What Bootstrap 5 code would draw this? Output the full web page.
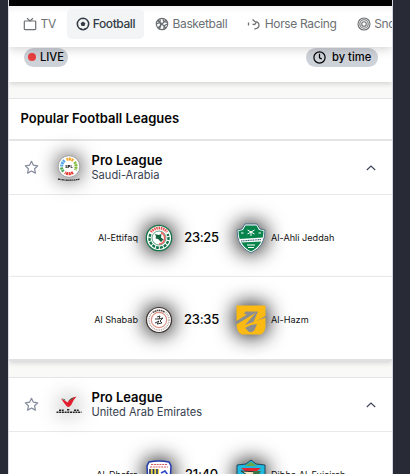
<!DOCTYPE html>
<html lang="en">
<head>
<meta charset="utf-8">
<meta name="viewport" content="width=device-width, initial-scale=1">
<title>Football</title>
<link href="https://cdn.jsdelivr.net/npm/bootstrap@5.3.0/dist/css/bootstrap.min.css" rel="stylesheet">
<style>
html,body{height:100%}
body{background:#282a36;font-family:Inter,"Liberation Sans",sans-serif;color:#050505;overflow:hidden}
.app-shell{width:385px;height:474px;margin-left:8px;background:#f9f9f8;overflow:hidden;border-left:1px solid #d9dbe0;border-right:1px solid #d5d7df}
.top-strip{height:6px;background:#000;margin:0 -1px}
.sports{height:41px;box-shadow:0 2px 10px rgba(0,0,0,.18);z-index:2;background:linear-gradient(#f3f3f3,#fff 7px);padding-left:5px;gap:2px;overflow:hidden}
.sport{height:30px;flex:none;font-size:12px;letter-spacing:-.34px;color:#6c7073;border-radius:5px;padding:0 9px;gap:3.500px;margin-top:-5px;white-space:nowrap}
.sport.on{background:#f2f4f5;color:#343d47;font-weight:500;letter-spacing:-.44px;gap:3px}
.filters{height:35px;padding:1px 14px 0 15px;background:#fff;z-index:1;box-shadow:0 2px 5px rgba(0,0,0,.15)}
.chip{height:19px;background:#cdd1d8;font-size:11.2px;font-weight:500;line-height:18px;margin-top:-.5px;white-space:nowrap}
.chip-live{width:44px}
.chip-time{width:72px;gap:6px;padding-left:7px}
.live-dot{width:8px;height:8px;background:#e73f3f}
.panel-top{height:43px;margin-top:16px;border-top:1px solid #e5e5e5;border-bottom:2px solid #e5e5e5;padding-left:11.5px;font-size:13px;font-weight:600}
.league{height:54px;border-bottom:1px solid #e8e8ea;padding:0 15px 0 15px}
.league-logo{width:28px;height:28px;margin-left:15.5px;margin-right:9px;overflow:visible;flex:none}
.league-name{font-size:13px;font-weight:600;line-height:15px}
.league-land{font-size:11.1px;line-height:14px;color:#374151}
.fixture{height:82px;border-bottom:1px solid #efefef;padding-top:4px}
.club{font-size:9.15px;white-space:nowrap;color:#111}
.home{width:129px}
.kick{width:43px;font-size:13px;font-weight:500;letter-spacing:-.3px;white-space:nowrap}
.crest{width:28px;height:28px;margin:0 7px;flex:none;overflow:visible}
.away-crest{width:30px;height:30px;margin:0 5px 0 13px;flex:none;overflow:visible}
.glow{filter:drop-shadow(0 0 11px rgba(0,0,0,.95)) drop-shadow(0 0 6px rgba(0,0,0,.2))}
.glow-sm{filter:drop-shadow(0 0 10px rgba(0,0,0,.85))}
.section-end{border-bottom:2px solid #e1e2e5;box-shadow:0 2px 5px rgba(0,0,0,.15);height:84px;padding-top:4px}
.next-league{margin-top:16px;border-top:1px solid #e5e5e8}
</style>
<script src="https://cdn.jsdelivr.net/npm/bootstrap@5.3.0/dist/js/bootstrap.bundle.min.js"></script>
</head>
<body>
<main class="app-shell d-flex flex-column">
<div class="top-strip flex-shrink-0"></div>
<nav class="sports d-flex align-items-center flex-shrink-0 position-relative">
<a class="sport d-flex align-items-center text-decoration-none"><svg width="14" height="14" viewBox="0 0 14 14" fill="none" stroke="currentColor" stroke-width="1.2"><rect x="1.3" y="4" width="11.4" height="8.6" rx=".8"/><path d="M4 1.3 7 4l3-2.7"/></svg>TV</a>
<a class="sport on d-flex align-items-center text-decoration-none"><svg width="14" height="14" viewBox="0 0 14 14" fill="none" stroke="currentColor" stroke-width="1.5"><circle cx="7" cy="7" r="5.7"/><path fill="currentColor" stroke="none" d="m7 4.600 2.400 1.700-.9 2.800h-3l-.9-2.800zM5.300 1.200h3.400L7 2.500zM1 6l1.400 2-.7 1.700zM13 6l-1.400 2 .7 1.700zM3.500 11.500l2-.5.5 1.800zM10.500 11.500l-2-.5-.5 1.800z"/></svg>Football</a>
<a class="sport d-flex align-items-center text-decoration-none"><svg width="14" height="14" viewBox="0 0 14 14" fill="none" stroke="currentColor" stroke-width="1.2"><circle cx="7" cy="7" r="5.700"/><path d="M2.800 3 11 11M11 3 3 11M5 1.500Q6 6 1.400 7M9 12.500Q8 8 12.600 7M4 12Q8 8 3 4M8 1.300Q8 6 12.500 5"/></svg>Basketball</a>
<a class="sport d-flex align-items-center text-decoration-none"><svg width="14" height="14" viewBox="0 0 14 14" fill="none" stroke="currentColor" stroke-width="1.300"><path d="M1.500 5.500v3M5.500 2.500 8 4.700q4 .2 4 3.600 0 3.200-4.500 3.700M5.500 7q2.500 1.500 3.500-1.500"/></svg>Horse Racing</a>
<a class="sport d-flex align-items-center text-decoration-none"><svg width="14" height="14" viewBox="0 0 14 14" fill="none" stroke="currentColor" stroke-width="1.100"><circle cx="7" cy="7" r="6"/><circle cx="7" cy="7" r="4.200"/><circle cx="7" cy="7" r="2.300"/></svg>Snooker</a>
</nav>
<div class="filters d-flex justify-content-between align-items-start flex-shrink-0 position-relative">
<span class="chip chip-live rounded-pill d-inline-flex align-items-center ps-1 gap-1"><i class="live-dot rounded-circle"></i>LIVE</span>
<span class="chip chip-time rounded-pill d-inline-flex align-items-center"><svg width="13" height="13" viewBox="0 0 13 13" fill="none" stroke="#000" stroke-width="1.200"><circle cx="6.500" cy="6.500" r="5.600"/><path d="M6.500 2.800v4l2.300 1.300"/></svg>by time</span>
</div>
<header class="panel-top bg-white d-flex align-items-center flex-shrink-0">Popular Football Leagues</header>
<section class="bg-white flex-shrink-0">
<div class="league d-flex align-items-center">
<svg width="15" height="15" viewBox="0 0 15 15" fill="none" stroke="#858b9c" stroke-width="1.200" stroke-linejoin="round"><path d="m7.500 1.300 1.900 3.900 4.300.6-3.100 3 .8 4.300-3.900-2.100-3.900 2.100.8-4.300-3.100-3 4.300-.6z"/></svg>
<svg class="league-logo glow-sm" viewBox="0 0 28 28"><circle cx="14" cy="12.500" r="10.800" fill="#fff" stroke="#929292" stroke-width=".8"/><g fill="none" stroke-width="3" stroke-dasharray="2 .5"><path stroke="#50a4e8" d="M6.700 12.500a7.300 7.300 0 0 1 3-6"/><path stroke="#f5a72b" d="M11.500 5.500a7.300 7.300 0 0 1 7 1.300"/><path stroke="#84bc3c" d="M19.500 8a7.300 7.300 0 0 1 .6 8"/><path stroke="#e83b32" d="M18 18.500a7.300 7.300 0 0 1-8 0"/><path stroke="#4aa555" d="M8.500 17.500a7 7 0 0 1-2-4"/></g><text x="14" y="14" text-anchor="middle" font-size="4" font-weight="700">SPL</text><path d="M3 25q11.500 2.500 22 0" fill="none" stroke="#333" stroke-width="1.300" stroke-dasharray="2 .5 1 .4"/></svg>
<div><div class="league-name">Pro League</div><div class="league-land">Saudi-Arabia</div></div>
<svg class="ms-auto" width="12" height="12" viewBox="0 0 12 12" fill="none" stroke="#3d4358" stroke-width="1.100"><path d="M1.800 8 6 4l4.200 4"/></svg>
</div>
<div class="fixture d-flex align-items-center">
<div class="home club text-end">Al-Ettifaq</div>
<svg class="crest glow" viewBox="0 0 28 28"><circle cx="14" cy="14" r="12.700" fill="#fff" stroke="#15764a" stroke-width="1.300"/><path d="M5.500 10A9.500 9.500 0 1 0 22.500 10" fill="none" stroke="#15764a" stroke-width="2.400" stroke-dasharray="3 1"/><path d="M6 8A10 10 0 0 1 22 8" fill="none" stroke="#e44b48" stroke-width="2.800" stroke-dasharray="1.400 .8"/><circle cx="14" cy="14" r="7" fill="#fff" stroke="#1b7850" stroke-width=".7"/><path d="M16 8.500a6 6 0 0 1-2 11.500" fill="none" stroke="#ec5a55" stroke-width="1.500"/><path d="m10 10 3.500 1 3-1-.5 3.500 2.500 2-2.500 2.500-3-3-2.500-.5.500-2z" fill="#12653e"/></svg>
<div class="kick text-center">23:25</div>
<svg class="away-crest glow" viewBox="0 0 30 30"><path d="M9 1h12l3 5 5 1q0 17-14 23Q1 24 1 7l5-1z" fill="#fff" stroke="#285873" stroke-width=".8"/><path d="M9.500 2.500h11L23 7l4.500 1q0 14-12.500 20.500Q2.500 22 2.500 8L7 7z" fill="#07834c"/><path d="M3 16 27 14.500l-1 4-22 1z" fill="#fff"/><path d="m11.500 7 7 4M18.500 7l-7 4M15 8v5M5 10h2.500M22.500 10H25M11 22h8M12 24.500h6" stroke="#fff"/><path d="m5 18 20-1.500" stroke="#3c6470" stroke-width="1.100" stroke-dasharray="1.200 .5"/></svg>
<div class="club">Al-Ahli Jeddah</div>
</div>
<div class="fixture section-end d-flex align-items-center">
<div class="home club text-end">Al Shabab</div>
<svg class="crest glow" viewBox="0 0 28 28"><circle cx="14" cy="14" r="12.500" fill="#fff" stroke="#3d3432" stroke-width="1.200"/><circle cx="14" cy="14" r="10" fill="none" stroke="#b9a8a4" stroke-width="1.500" stroke-dasharray="1 .8"/><circle cx="14" cy="14" r="7.700" fill="#fff" stroke="#dd9488" stroke-width="1.200"/><path d="M8 6.500Q14 2.500 20 6.500" stroke="#493e3c" stroke-width="1.300" fill="none" stroke-dasharray="1.500 .6"/><path d="m12 11 3-1-1 3 4-1-3 3 2 2-5 1 2-3-4 2M10 13h4" fill="none" stroke="#222" stroke-width=".9"/></svg>
<div class="kick text-center">23:35</div>
<svg class="away-crest glow" viewBox="0 0 30 30"><path fill="#8b8e91" d="M1 1h28v20l-4 8H5l-4-8z"/><path fill="#fbb913" d="M.5.500h29V11L17 18l5-11.500H9.500L8 9l3 .5L.5 16z"/><path fill="#fbb913" d="M.5 19.500 20 7.500 9 20l20.500-7.500V22q-1 6-5 7.500H6Q1 28 .5 19.500z"/><path d="m9 23 6-3 6-1-2.500 6q-3 3.500-6 1.500-1.500-2-3.500-3.500z" fill="#8b8e91"/></svg>
<div class="club">Al-Hazm</div>
</div>
</section>
<section class="next-league bg-white flex-shrink-0">
<div class="league d-flex align-items-center">
<svg width="15" height="15" viewBox="0 0 15 15" fill="none" stroke="#858b9c" stroke-width="1.200" stroke-linejoin="round"><path d="m7.500 1.300 1.900 3.900 4.300.6-3.100 3 .8 4.300-3.900-2.100-3.900 2.100.8-4.300-3.100-3 4.300-.6z"/></svg>
<svg class="league-logo glow-sm" viewBox="0 0 28 28"><path d="M6 7.500q3 1 6.500 4 3-5 9-6-3 3-5 8-2.500 4-5 1.500-3-3.500-5.500-7.500z" fill="#e21d2d"/><path d="m13 10 3.500-3 3-.5-3.500 2zM6.500 7.500l3 .5 1.500 1.500z" fill="#246846"/><path d="M1.500 21.300h25M4 19.300h5m3-.5h3m4 .5h5" stroke="#222" stroke-width="1.500" stroke-dasharray="2 .7" fill="none"/></svg>
<div><div class="league-name">Pro League</div><div class="league-land">United Arab Emirates</div></div>
<svg class="ms-auto" width="12" height="12" viewBox="0 0 12 12" fill="none" stroke="#3d4358" stroke-width="1.100"><path d="M1.800 8 6 4l4.200 4"/></svg>
</div>
<div class="fixture d-flex align-items-center">
<div class="home club text-end">Al-Dhafra</div>
<svg class="crest glow" viewBox="0 0 28 28"><path d="M4 1q10-2 20 0l2 4-1 17-11 6-11-6L2 5z" fill="#fff" stroke="#243bae" stroke-width="1.500"/><path d="M6 3.500h16M5 6h18" stroke="#d75a64" stroke-width="1.200" stroke-dasharray="2 .8"/><path d="M4 8h10v18L4 21z" fill="#ead53d"/><path d="M5 8v13M8.500 8v15M12 8v17" stroke="#273579" stroke-width="1.600"/><path d="m16 12 4-2 3 4-4 1 3 3" fill="none" stroke="#2c44c8" stroke-width="1.500"/></svg>
<div class="kick text-center">21:40</div>
<svg class="away-crest glow" viewBox="0 0 30 30"><path d="m15 0 5 4 9 1v12q-3 9-14 13Q4 26 1 17V5l9-1z" fill="#20b8df" stroke="#20475a"/><path d="m9 6 6-4 6 4z" fill="#67a84a"/><path d="M5 8h20l-4 3H9z" fill="#e6252e"/><path d="m5 11 19 1-8 6z" fill="#f3e6bf" stroke="#27362c"/><path d="m18 11 7 0-4 6-7 3z" fill="#397546"/></svg>
<div class="club">Dibba Al-Fujairah</div>
</div>
</section>
</main>
</body>
</html>
